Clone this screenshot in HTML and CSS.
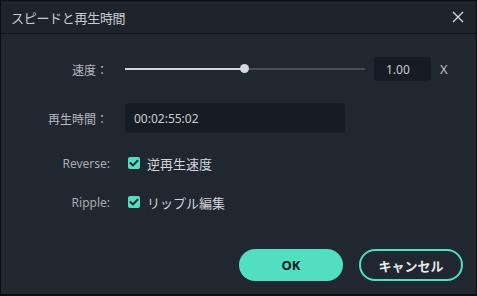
FILE: index.html
```html
<!DOCTYPE html>
<html lang="ja">
<head>
<meta charset="utf-8">
<title>スピードと再生時間</title>
<link rel="stylesheet" href="styles.css">
</head>
<body>
<div class="dialog">
  <div class="titlebar">
    <span class="title">スピードと再生時間</span>
    <svg class="close" width="12" height="12" viewBox="0 0 12 12"><path d="M1 1L11 11M11 1L1 11" stroke="#d6d8da" stroke-width="1.4" fill="none"/></svg>
  </div>
  <div class="content">
    <div class="row row-speed">
      <label class="lbl">速度：</label>
      <div class="slider">
        <div class="fill"></div>
        <div class="knob"></div>
      </div>
      <div class="valbox">1.00</div>
      <span class="unit">X</span>
    </div>
    <div class="row row-time">
      <label class="lbl">再生時間：</label>
      <div class="timebox">00:02:55:02</div>
    </div>
    <div class="row row-check first">
      <label class="lbl latin">Reverse:</label>
      <span class="check"><svg width="12" height="12" viewBox="0 0 12 12"><path d="M2.6 6.2L5 8.4L9.4 3.8" stroke="#1b2129" stroke-width="2" fill="none" stroke-linecap="square"/></svg></span>
      <span class="ctext">逆再生速度</span>
    </div>
    <div class="row row-check">
      <label class="lbl latin">Ripple:</label>
      <span class="check"><svg width="12" height="12" viewBox="0 0 12 12"><path d="M2.6 6.2L5 8.4L9.4 3.8" stroke="#1b2129" stroke-width="2" fill="none" stroke-linecap="square"/></svg></span>
      <span class="ctext">リップル編集</span>
    </div>
    <div class="buttons">
      <button class="btn ok">OK</button>
      <button class="btn cancel">キャンセル</button>
    </div>
  </div>
</div>
</body>
</html>
```
FILE: styles.css
```css
* { box-sizing: border-box; margin: 0; padding: 0; }
html, body { width: 477px; height: 296px; background: #0e1014; overflow: hidden; }
body {
  font-family: "Noto Sans", "Noto Sans CJK JP", sans-serif;
  font-size: 12px;
  color: #c4c7ca;
}
.dialog {
  width: 477px;
  height: 296px;
  border: 1px solid #0c0e12;
  border-bottom-width: 2px;
  background: #212730;
  display: flex;
  flex-direction: column;
}
.titlebar {
  height: 33px;
  flex: none;
  display: flex;
  align-items: center;
  justify-content: space-between;
  padding: 0 12px 0 10px;
  background: #1e242c;
  border-bottom: 1px solid #0e1115;
}
.title {
  font-family: "Noto Sans CJK JP", sans-serif;
  font-size: 13px;
  color: #c9cbce;
  letter-spacing: -0.3px;
}
.close { display: block; }
.content {
  flex: 1;
  display: flex;
  flex-direction: column;
}
.row {
  display: flex;
  align-items: center;
}
.lbl {
  width: 107px;
  flex: none;
  text-align: right;
  font-family: "Noto Sans CJK JP", sans-serif;
  font-size: 12px;
  color: #b7babe;
}
.lbl.latin { font-family: "Noto Sans", sans-serif; color: #a9adb2; padding-right: 0; width: 109px; }
.lbl.latin + .check { margin-left: 18px; }
.row-speed { height: 24px; margin-top: 23px; }
.slider {
  margin-left: 17px;
  width: 240px;
  height: 2px;
  background: #4a4f57;
  position: relative;
}
.fill {
  width: 120px;
  height: 2px;
  background: #d3d5d8;
}
.knob {
  position: absolute;
  left: 115px;
  top: -4px;
  width: 9px;
  height: 9px;
  border-radius: 50%;
  background: #d6d8db;
}
.valbox {
  margin-left: 9px;
  width: 57px;
  height: 24px;
  background: #171c24;
  border-radius: 3px;
  padding-left: 12px;
  display: flex;
  align-items: center;
  font-size: 12px;
  color: #c9ccd0;
}
.unit {
  margin-left: 9px;
  font-size: 13px;
  color: #bfc2c6;
}
.row-time { height: 30px; margin-top: 22px; }
.timebox {
  margin-left: 17px;
  width: 220px;
  height: 30px;
  background: #171c24;
  border-radius: 4px;
  padding-left: 9px;
  display: flex;
  align-items: center;
  font-size: 12px;
  color: #c9ccd0;
}
.row-check { height: 20px; margin-top: 19px; }
.row-check.first { margin-top: 20px; }
.check {
  margin-left: 20px;
  width: 12px;
  height: 12px;
  border-radius: 2px;
  background: #52dfc1;
  display: flex;
}
.ctext {
  margin-left: 7px;
  font-family: "Noto Sans CJK JP", sans-serif;
  font-size: 13px;
  color: #d3d5d8;
}
.buttons {
  display: flex;
  justify-content: flex-end;
  gap: 16px;
  margin-top: 37px;
  padding-right: 13px;
}
.btn {
  width: 104px;
  height: 32px;
  border-radius: 16px;
  font-family: "Noto Sans", "Noto Sans CJK JP", sans-serif;
  font-size: 13px;
  font-weight: bold;
}
.ok {
  background: #52dfc1;
  border: none;
  color: #15191f;
}
.cancel {
  background: transparent;
  border: 2px solid #52dfc1;
  color: #e8eaec;
}
```
